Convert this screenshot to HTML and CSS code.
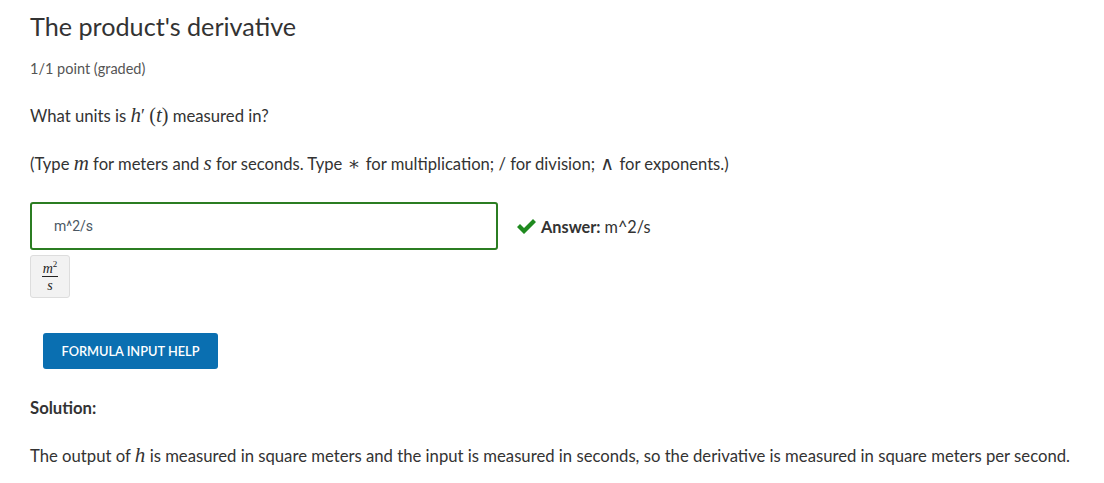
FILE: index.html
```html
<!DOCTYPE html>
<html>
<head>
<meta charset="utf-8">
<link rel="stylesheet" href="styles.css">
</head>
<body>
<div class="problem">
  <h2 class="title">The product's derivative</h2>
  <div class="meta">1/1 point (graded)</div>
  <p class="q">What units is <span class="math">h</span><span class="prime">′</span> <span class="mathr">(</span><span class="math">t</span><span class="mathr">)</span> measured in?</p>
  <p class="hint">(Type <span class="math">m</span> for meters and <span class="math">s</span> for seconds. Type <span class="op">∗</span> for multiplication; / for division; <span class="op">∧</span> for exponents.)</p>
  <div class="answer-row">
    <div class="input">m^2/s</div>
    <div class="status">
      <svg class="check" width="21" height="17" viewBox="0 0 21 17"><path d="M1 9 L4 6 L8 10 L17 1 L20 4 L8 16 Z" fill="#1f8a1f"/></svg>
      <span class="label">Answer:</span> <span class="val">m^2/s</span>
    </div>
  </div>
  <div class="preview">
    <span class="frac"><span class="num">m<sup>2</sup></span><span class="den">s</span></span>
  </div>
  <button class="help">FORMULA INPUT HELP</button>
  <p class="sol-h">Solution:</p>
  <p class="sol">The output of <span class="math">h</span> is measured in square meters and the input is measured in seconds, so the derivative is measured in square meters per second.</p>
</div>
</body>
</html>
```
FILE: styles.css
```css
html, body { margin: 0; padding: 0; background: #fff; }
body { font-family: Lato, "Noto Sans", sans-serif; color: #333; }
.problem { padding: 0 0 0 30px; }
.title { font-size: 25.2px; font-weight: 400; line-height: 30px; margin: 11px 0 0; color: #333; }
.meta { font-size: 14.5px; line-height: 20px; margin-top: 18px; color: #555; }
.q { font-size: 16.7px; line-height: 24px; margin: 25px 0 0; }
.hint { font-size: 16.6px; line-height: 24px; margin: 24px 0 0; }
.math { font-family: "Liberation Serif", serif; font-style: italic; font-size: 21px; line-height: 20px; }
.mathr { font-family: "Liberation Serif", serif; font-size: 20px; line-height: 20px; }
.op { font-family: "DejaVu Serif", serif; font-size: 19px; line-height: 20px; font-weight: 400; color: #333; margin: 0 1px; }
.prime { font-family: "Liberation Serif", serif; font-size: 18px; line-height: 20px; }
.answer-row { display: flex; align-items: center; margin-top: 26px; }
.input { box-sizing: border-box; width: 468px; height: 48px; border: 2px solid #2b7d22; border-radius: 3px; padding: 0 22px; display: flex; align-items: center; font-family: Roboto, "Liberation Sans", sans-serif; font-size: 14px; color: #4a5763; }
.status { display: flex; align-items: center; margin-left: 18px; font-size: 16.3px; color: #333; }
.check { margin-right: 4px; }
.label { font-weight: 700; margin-right: 4px; }
.preview { box-sizing: border-box; width: 40px; height: 43px; margin-top: 5px; background: #f2f2f2; border: 1px solid #ddd; border-radius: 3px; display: flex; align-items: center; justify-content: center; }
.frac { display: inline-flex; flex-direction: column; align-items: center; font-family: "Liberation Serif", serif; font-style: italic; font-size: 14px; line-height: 13px; color: #222; }
.num { border-bottom: 1px solid #222; padding: 0 1px 1px; }
.num sup { font-size: 9px; font-style: normal; vertical-align: 6px; line-height: 0; }
.den { padding-top: 2px; }
.help { display: block; margin: 35px 0 0 13px; width: 175px; height: 36px; background: #0a6fb1; color: #fff; border: none; border-radius: 3px; font-family: Lato, sans-serif; font-size: 12.8px; font-weight: 600; padding: 0; }
.sol-h { font-size: 16.7px; line-height: 24px; font-weight: 700; margin: 27px 0 0; }
.sol { font-size: 16.7px; line-height: 24px; margin: 24px 0 0; }
```
